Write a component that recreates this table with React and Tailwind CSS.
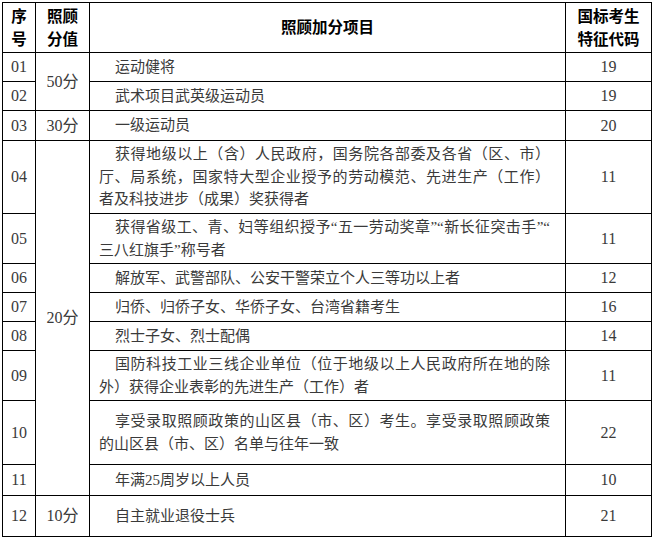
const FONT = "font-['Liberation_Serif','Noto_Sans_CJK_SC',serif]"

// each row: id, height class, text lines, code; score cells only on their first row
const ROWS = [
  { id: '01', h: 'h-[29px]', lines: ['运动健将'], code: '19', score: { text: '50分', span: 2 } },
  { id: '02', h: 'h-[29px]', lines: ['武术项目武英级运动员'], code: '19' },
  { id: '03', h: 'h-[30px]', lines: ['一级运动员'], code: '20', score: { text: '30分', span: 1 } },
  {
    id: '04', h: 'h-[73px]', code: '11', score: { text: '20分', span: 8 },
    lines: ['获得地级以上（含）人民政府，国务院各部委及各省（区、市）', '厅、局系统，国家特大型企业授予的劳动模范、先进生产（工作）', '者及科技进步（成果）奖获得者'],
  },
  { id: '05', h: 'h-[50px]', code: '11', lines: ['获得省级工、青、妇等组织授予“五一劳动奖章”“新长征突击手”“', '三八红旗手”称号者'] },
  { id: '06', h: 'h-[29px]', lines: ['解放军、武警部队、公安干警荣立个人三等功以上者'], code: '12' },
  { id: '07', h: 'h-[29px]', lines: ['归侨、归侨子女、华侨子女、台湾省籍考生'], code: '16' },
  { id: '08', h: 'h-[29px]', lines: ['烈士子女、烈士配偶'], code: '14' },
  { id: '09', h: 'h-[50px]', code: '11', lines: ['国防科技工业三线企业单位（位于地级以上人民政府所在地的除', '外）获得企业表彰的先进生产（工作）者'] },
  { id: '10', h: 'h-[64px]', code: '22', lines: ['享受录取照顾政策的山区县（市、区）考生。享受录取照顾政策', '的山区县（市、区）名单与往年一致'] },
  { id: '11', h: 'h-[31px]', lines: ['年满25周岁以上人员'], code: '10' },
  { id: '12', h: 'h-[41px]', lines: ['自主就业退役士兵'], code: '21', score: { text: '10分', span: 1 } },
]

const cell = 'border border-black p-0 align-middle'

function ItemText({ lines }) {
  return (
    <div className="pl-[9px] pr-[15px] text-[15px] leading-[22.5px] text-[#3a3a3a]">
      {lines.map((l, n) => {
        const last = n === lines.length - 1
        return (
          <div key={n} className={`${n === 0 ? 'indent-[16px]' : ''} ${last ? 'text-left' : 'text-justify [text-align-last:justify]'}`}>
            {l}
          </div>
        )
      })}
    </div>
  )
}

export default function App() {
  return (
    <div className={`min-h-[539px] w-[653px] bg-white pl-[2px] pt-[2px] ${FONT}`}>
      <table className="w-[649px] table-fixed border-collapse">
        <colgroup>
          <col className="w-[33px]" />
          <col className="w-[54px]" />
          <col className="w-[476px]" />
          <col className="w-[86px]" />
        </colgroup>
        <thead>
          <tr className="h-[50px] text-[15.5px] font-bold leading-[23px] text-black">
            <th className={`${cell} text-center`}>序<br />号</th>
            <th className={`${cell} text-center`}>照顾<br />分值</th>
            <th className={`${cell} text-center`}>照顾加分项目</th>
            <th className={`${cell} text-center`}>国标考生<br />特征代码</th>
          </tr>
        </thead>
        <tbody>
          {ROWS.map((r) => (
            <tr key={r.id} className={r.h}>
              <td className={`${cell} text-center text-[16px] text-[#3a3a3a]`}>{r.id}</td>
              {r.score && (
                <td rowSpan={r.score.span} className={`${cell} text-center text-[16px] text-[#3a3a3a]`}>
                  {r.score.text}
                </td>
              )}
              <td className={cell}><ItemText lines={r.lines} /></td>
              <td className={`${cell} text-center text-[16px] text-[#3a3a3a]`}>{r.code}</td>
            </tr>
          ))}
        </tbody>
      </table>
    </div>
  )
}
